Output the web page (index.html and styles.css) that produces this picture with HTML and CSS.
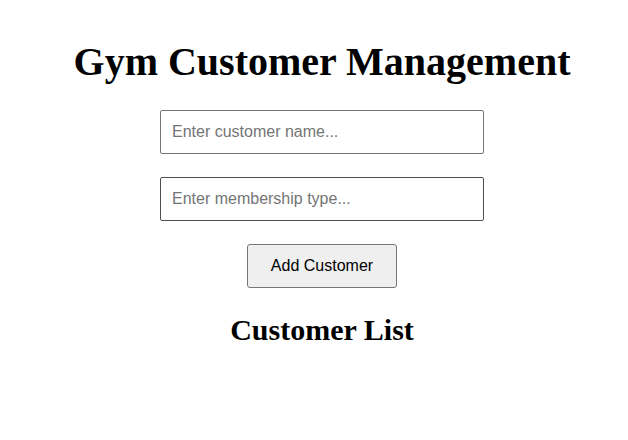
FILE: index.html
```html
<!DOCTYPE html>
<html lang="en">
<head>
<meta charset="utf-8">
<title>Gym Customer Management</title>
<link rel="stylesheet" href="styles.css">
</head>
<body>
<div class="app">
  <h1 class="title">Gym Customer Management</h1>
  <div class="form">
    <input class="field" type="text" placeholder="Enter customer name...">
    <input class="field field-hover" type="text" placeholder="Enter membership type...">
    <button class="add-btn" type="button">Add Customer</button>
  </div>
  <h2 class="list-title">Customer List</h2>
  <ul class="list"></ul>
</div>
</body>
</html>
```

FILE: styles.css
```css
html, body {
  margin: 0;
  padding: 0;
  background: #ffffff;
}

.app {
  display: flex;
  flex-direction: column;
  align-items: center;
  padding: 38px 0 0 16px;
  font-family: "Liberation Serif", "Times New Roman", serif;
  color: #000000;
}

.title {
  margin: 0 0 25px;
  font-size: 40px;
  font-weight: bold;
  line-height: normal;
  text-align: center;
}

.form {
  display: flex;
  flex-direction: column;
  align-items: center;
  gap: 23px;
}

.field {
  box-sizing: border-box;
  width: 324px;
  height: 44px;
  margin: 0;
  padding: 0 11px;
  border: 1px solid #767676;
  border-radius: 2px;
  font-family: "Liberation Sans", Arial, sans-serif;
  font-size: 16px;
  color: #000000;
  background: #ffffff;
  outline: none;
}

.field::placeholder {
  color: #757575;
}

.field-hover {
  border-color: #4f4f4f;
}

.add-btn {
  box-sizing: border-box;
  width: 150px;
  height: 44px;
  margin: 0;
  padding: 0 20px;
  border: 1px solid #767676;
  border-radius: 3px;
  background: #efefef;
  font-family: "Liberation Sans", Arial, sans-serif;
  font-size: 16px;
  color: #000000;
}

.list-title {
  margin: 25px 0 0;
  font-size: 30px;
  font-weight: bold;
  line-height: normal;
  text-align: center;
}

.list {
  margin: 0;
  padding: 0;
  list-style: none;
}
```
